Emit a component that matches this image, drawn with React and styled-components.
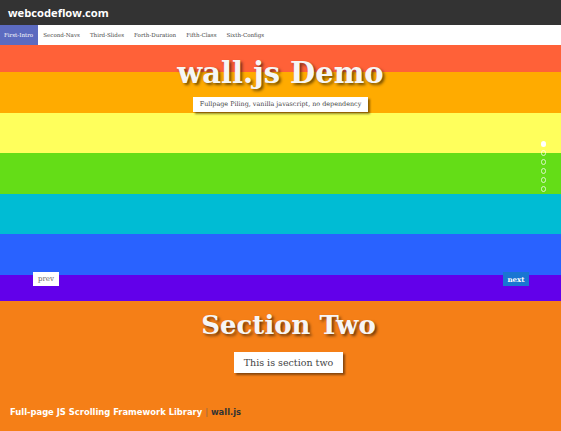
import React from "react";
import styled, { createGlobalStyle } from "styled-components";

const Global = createGlobalStyle`
  html, body { margin: 0; padding: 0; width: 561px; height: 431px; overflow: hidden; }
  body { font-family: "DejaVu Serif", serif; }
  * { box-sizing: border-box; }
`;

const Page = styled.div`
  display: flex;
  flex-direction: column;
  width: 561px;
  height: 431px;
`;

const TopBar = styled.header`
  height: 25px;
  background: #333333;
  display: flex;
  align-items: center;
  padding-left: 8px;
  font-family: "Open Sans", sans-serif;
  font-weight: 700;
  font-size: 11.2px;
  color: #ffffff;
`;

const Nav = styled.nav`
  height: 20px;
  background: #ffffff;
  display: flex;
  align-items: stretch;
`;

const Tab = styled.a`
  display: flex;
  align-items: center;
  padding: 0 5px 0 ${(p) => (p.$first ? 4 : 5)}px;
  font-family: "DejaVu Serif", serif;
  font-size: 5.55px;
  color: ${(p) => (p.$active ? "#ffffff" : "#444444")};
  background: ${(p) => (p.$active ? "#5c6bc0" : "transparent")};
`;

const Hero = styled.section`
  display: grid;
  position: relative;
`;

const Stripes = styled.div`
  grid-area: 1 / 1;
  display: flex;
  flex-direction: column;
`;

const Stripe = styled.div`
  height: ${(p) => p.$h}px;
  background: ${(p) => p.$c};
`;

const HeroContent = styled.div`
  grid-area: 1 / 1;
  display: flex;
  flex-direction: column;
  align-items: center;
  padding-top: 11px;
  z-index: 1;
`;

const Title = styled.h1`
  margin: 0;
  font-family: "DejaVu Serif", serif;
  font-weight: bold;
  font-size: ${(p) => p.$size}px;
  line-height: 1.2;
  color: #f6f6f6;
  text-shadow: 2px 2px 3px rgba(0, 0, 0, 0.55);
`;

const Tagline = styled.div`
  background: #ffffff;
  color: #444444;
  font-family: "DejaVu Serif", serif;
  font-size: ${(p) => p.$size}px;
  height: ${(p) => p.$h}px;
  padding: 0 ${(p) => p.$px}px;
  display: flex;
  align-items: center;
  box-shadow: 2px 2px 2px rgba(0, 0, 0, 0.45);
  margin-top: ${(p) => p.$mt}px;
`;

const Dots = styled.ul`
  position: absolute;
  right: 15px;
  top: 96px;
  margin: 0;
  padding: 0;
  list-style: none;
  display: flex;
  flex-direction: column;
  gap: 3.5px;
`;

const Dot = styled.li`
  width: 5.5px;
  height: 5.5px;
  border-radius: 50%;
  border: 1px solid rgba(255, 255, 255, 0.7);
  background: ${(p) => (p.$active ? "#ffffff" : "transparent")};
`;

const SlideButton = styled.button`
  position: absolute;
  top: 227px;
  ${(p) => (p.$side === "left" ? "left: 33px;" : "right: 32px;")}
  width: 26px;
  height: 14px;
  border: none;
  padding: 0;
  font-family: "DejaVu Serif", serif;
  font-size: 7px;
  font-weight: ${(p) => (p.$primary ? "bold" : "normal")};
  background: ${(p) => (p.$primary ? "#1976d2" : "#ffffff")};
  color: ${(p) => (p.$primary ? "#ffffff" : "#666666")};
  z-index: 2;
`;

const SectionTwo = styled.section`
  flex: 1;
  background: #f57f17;
  display: flex;
  flex-direction: column;
  align-items: center;
  padding: 9px 0 0 16px;
`;

const Footer = styled.div`
  margin-top: auto;
  align-self: stretch;
  margin-left: -16px;
  padding: 0 0 14px 10px;
  font-family: "DejaVu Sans", sans-serif;
  font-weight: bold;
  font-size: 8.4px;
  color: #ffffff;
`;

const Sep = styled.span`
  color: #8a6a4a;
  font-weight: normal;
`;

const Brand = styled.span`
  color: #333333;
`;

const tabs = ["First-Intro", "Second-Navs", "Third-Slides", "Forth-Duration", "Fifth-Class", "Sixth-Configs"];

const stripes = [
  [27, "#ff6138"],
  [41, "#ffab00"],
  [40, "#ffff5c"],
  [41, "#64dd17"],
  [40, "#00bcd4"],
  [41, "#2962ff"],
  [26, "#6200ea"],
];

export default function App() {
  return (
    <>
      <Global />
      <Page>
        <TopBar>webcodeflow.com</TopBar>
        <Nav>
          {tabs.map((t, i) => (
            <Tab key={t} $active={i === 0} $first={i === 0}>
              {t}
            </Tab>
          ))}
        </Nav>
        <Hero>
          <Stripes>
            {stripes.map(([h, c], i) => (
              <Stripe key={i} $h={h} $c={c} />
            ))}
          </Stripes>
          <HeroContent>
            <Title $size={29}>wall.js Demo</Title>
            <Tagline $size={6.4} $h={15} $px={7} $mt={6}>
              Fullpage Piling, vanilla javascript, no dependency
            </Tagline>
          </HeroContent>
          <Dots>
            {[0, 1, 2, 3, 4, 5].map((i) => (
              <Dot key={i} $active={i === 0} />
            ))}
          </Dots>
          <SlideButton $side="left">prev</SlideButton>
          <SlideButton $side="right" $primary>
            next
          </SlideButton>
        </Hero>
        <SectionTwo>
          <Title $size={26}>Section Two</Title>
          <Tagline $size={9.5} $h={21} $px={10} $mt={11}>
            This is section two
          </Tagline>
          <Footer>
            Full-page JS Scrolling Framework Library <Sep>|</Sep> <Brand>wall.js</Brand>
          </Footer>
        </SectionTwo>
      </Page>
    </>
  );
}
